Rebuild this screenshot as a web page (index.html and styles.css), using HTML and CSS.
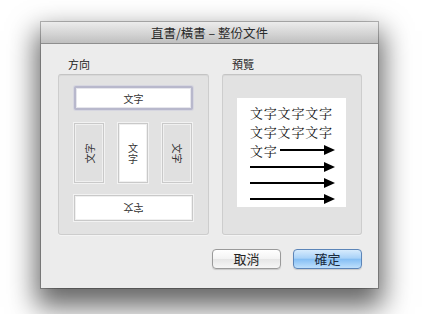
FILE: index.html
```html
<!DOCTYPE html>
<html lang="zh-Hant">
<head>
    <meta charset="UTF-8">
    <meta name="viewport" content="width=device-width, initial-scale=1.0">
    <title>直書/橫書 – 整份文件</title>
    <link rel="stylesheet" href="styles.css">
</head>
<body>
    <div class="desk">
        <div class="window">
            <div class="titlebar">直書/橫書 – 整份文件</div>
            <div class="content">
                <div class="groups">
                    <div class="group-col">
                        <div class="group-label">方向</div>
                        <div class="group direction">
                            <div class="dir-btn wide selected"><span>文字</span></div>
                            <div class="dir-row">
                                <div class="dir-btn tall gray"><span class="rot-left">文字</span></div>
                                <div class="dir-btn tall"><span class="upright">文字</span></div>
                                <div class="dir-btn tall gray"><span class="rot-right">文字</span></div>
                            </div>
                            <div class="dir-btn wide bottom"><span class="rot-flip">文字</span></div>
                        </div>
                    </div>
                    <div class="group-col">
                        <div class="group-label">預覽</div>
                        <div class="group preview">
                            <div class="sheet">
                                <div class="line">文字文字文字</div>
                                <div class="line">文字文字文字</div>
                                <div class="line flow">文字<svg class="arrow short" viewBox="0 0 55 12"><line x1="0" y1="6" x2="45" y2="6"/><polygon points="44,1 55,6 44,11"/></svg></div>
                                <svg class="arrow" viewBox="0 0 85 16"><line x1="0" y1="8" x2="75" y2="8"/><polygon points="74,3 85,8 74,13"/></svg>
                                <svg class="arrow" viewBox="0 0 85 16"><line x1="0" y1="8" x2="75" y2="8"/><polygon points="74,3 85,8 74,13"/></svg>
                                <svg class="arrow" viewBox="0 0 85 16"><line x1="0" y1="8" x2="75" y2="8"/><polygon points="74,3 85,8 74,13"/></svg>
                            </div>
                        </div>
                    </div>
                </div>
                <div class="buttons">
                    <button class="btn">取消</button>
                    <button class="btn default">確定</button>
                </div>
            </div>
        </div>
    </div>
</body>
</html>
```

FILE: styles.css
```css
html, body {
    margin: 0;
    background: #ffffff;
}
body {
    font-family: "Noto Sans CJK TC", "Noto Sans CJK SC", sans-serif;
    color: #222;
}
.desk {
    width: 430px;
    height: 314px;
    padding: 22px 0 0 41px;
    box-sizing: border-box;
    overflow: hidden;
}
.window {
    width: 337px;
    height: 266px;
    background: #ececec;
    box-shadow: 0 0 0 1px rgba(0, 0, 0, 0.25), 0 14px 26px 5px rgba(0, 0, 0, 0.6);
    display: flex;
    flex-direction: column;
}
.titlebar {
    height: 22px;
    line-height: 22px;
    text-align: center;
    font-size: 12.5px;
    color: #2a2a2a;
    background: linear-gradient(#ececec, #d2d2d2 60%, #bfbfbf);
    border-bottom: 1px solid #8e8e8e;
    box-sizing: border-box;
}
.content {
    padding: 13px 16px 0 17px;
}
.groups {
    display: flex;
    gap: 13px;
}
.group-label {
    font-size: 11px;
    line-height: 14px;
    padding-left: 10px;
    margin-bottom: 3px;
}
.group {
    height: 161px;
    box-sizing: border-box;
    background: #e2e2e2;
    border: 1px solid #cdcdcd;
    border-top-color: #c4c4c4;
    border-radius: 3px;
    box-shadow: inset 0 1px 0 #d8d8d8, 0 1px 0 #f4f4f4;
}
.direction {
    width: 151px;
    padding: 11px 0 0 15px;
    display: flex;
    flex-direction: column;
    gap: 13px;
}
.dir-btn {
    box-sizing: border-box;
    background: #ffffff;
    border: 1px solid #c9c9c9;
    box-shadow: 0 0 0 1px #f2f2f2, inset 0 0 0 1px #f0f0f0;
    display: flex;
    align-items: center;
    justify-content: center;
    font-size: 10px;
    color: #333;
}
.dir-btn.wide {
    width: 119px;
    height: 24px;
}
.dir-btn.selected {
    border: 2px solid #b8b8cc;
    box-shadow: 0 0 0 1px #d6d6e0, inset 0 0 0 1px #e6e6ec;
    border-radius: 2px;
}
.dir-btn.bottom {
    height: 26px;
    margin-top: -1px;
}
.dir-row {
    display: flex;
    gap: 14px;
}
.dir-btn.tall {
    width: 30px;
    height: 60px;
}
.dir-btn.gray {
    background: #e0e0e0;
}
.upright {
    width: 10px;
    line-height: 11px;
    text-align: center;
    word-break: break-all;
}
.rot-left {
    transform: rotate(-90deg);
    white-space: nowrap;
}
.rot-right {
    transform: rotate(90deg);
    white-space: nowrap;
}
.rot-flip {
    transform: scaleY(-1);
}
.preview {
    width: 140px;
    padding: 23px 0 0 14px;
}
.sheet {
    width: 109px;
    height: 109px;
    background: #ffffff;
    box-sizing: border-box;
    padding: 5px 0 0 13px;
    display: flex;
    flex-direction: column;
}
.line {
    font-family: "Noto Serif CJK TC", "Noto Sans CJK TC", serif;
    font-size: 13px;
    letter-spacing: 0.8px;
    line-height: 19px;
    height: 19px;
    color: #111;
    white-space: nowrap;
}
.line.flow {
    height: 18px;
    display: flex;
    align-items: center;
}
.arrow {
    width: 85px;
    height: 16px;
    display: block;
}
.arrow.short {
    width: 55px;
    height: 12px;
    margin-left: 2px;
}
.arrow line {
    stroke: #000;
    stroke-width: 2;
}
.arrow polygon {
    fill: #000;
}
.buttons {
    display: flex;
    justify-content: flex-end;
    gap: 12px;
    margin-top: 14px;
}
.btn {
    width: 69px;
    height: 20px;
    padding: 0;
    font-family: "Noto Sans CJK TC", sans-serif;
    font-size: 13px;
    line-height: 18px;
    color: #222;
    border: 1px solid #9a9a9a;
    border-radius: 4px;
    background: linear-gradient(#ffffff, #f3f3f3 50%, #e6e6e6 51%, #f6f6f6);
    box-shadow: 0 1px 1px rgba(0, 0, 0, 0.15);
}
.btn.default {
    border-color: #5c85b8;
    background: linear-gradient(#d6ebfd, #a9d2f8 45%, #86bff4 52%, #bfe0fc);
    color: #1a2a3c;
}
```
